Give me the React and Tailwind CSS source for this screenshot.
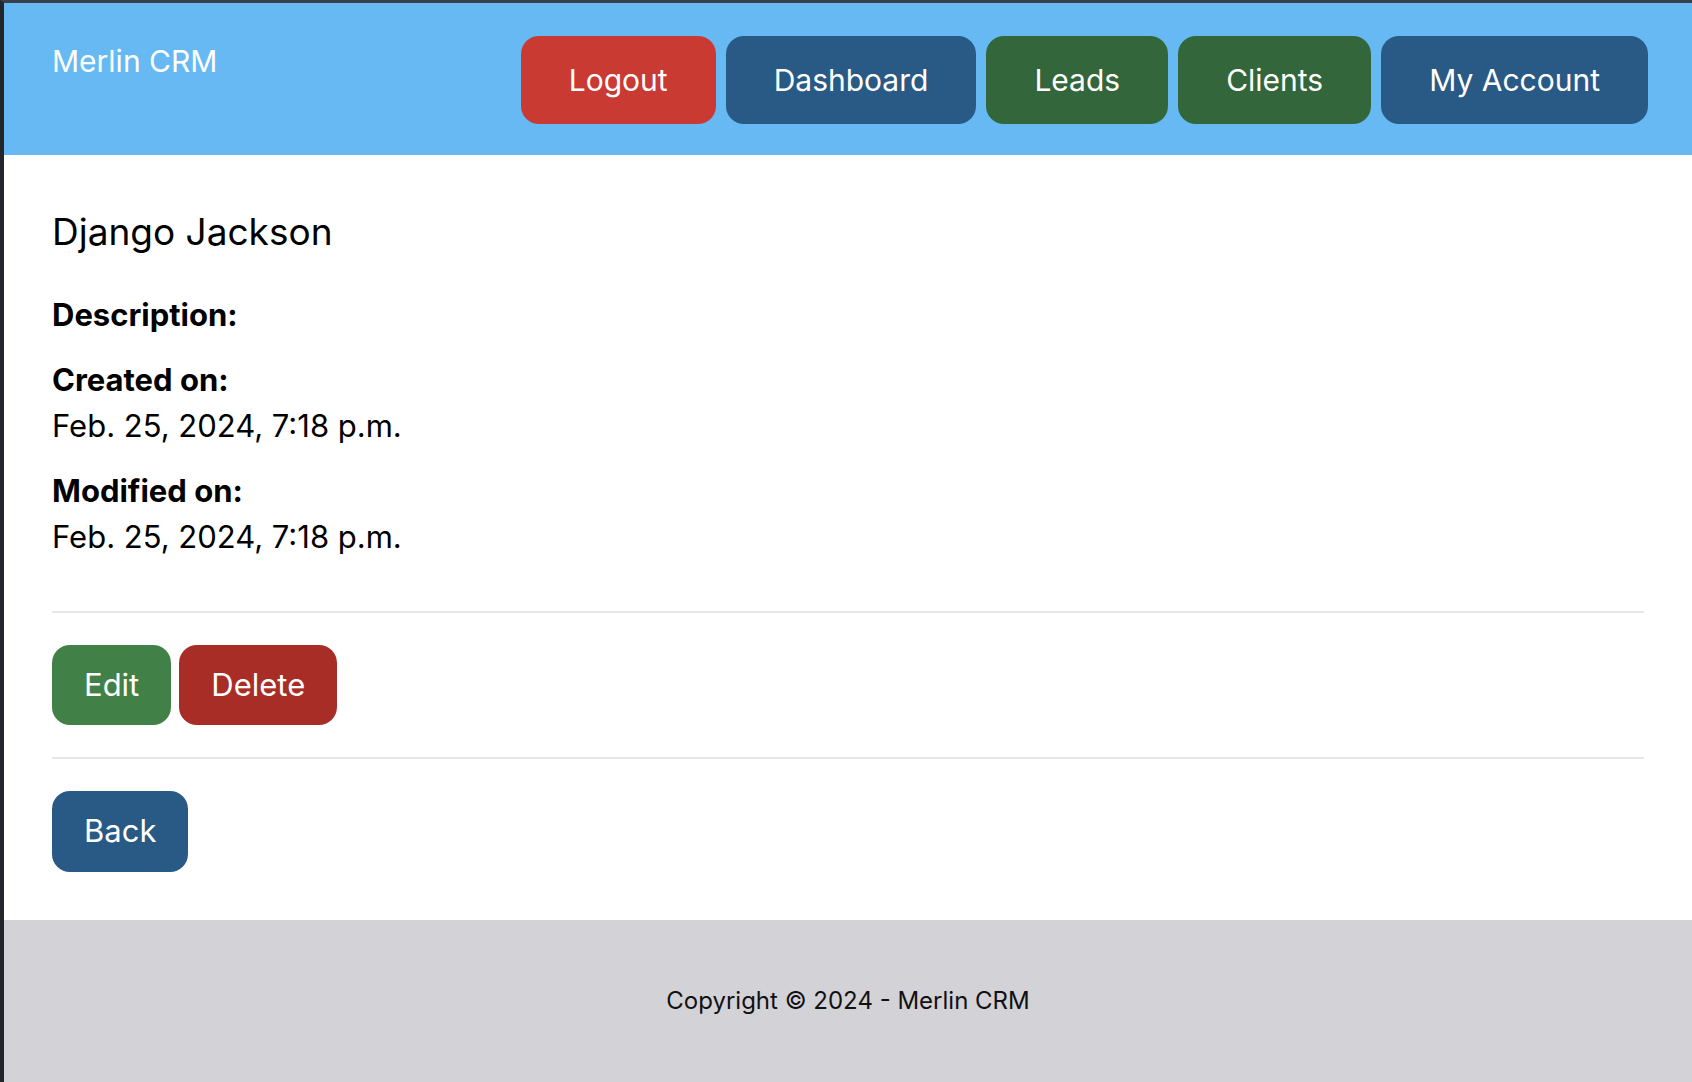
import React from 'react'

const navItems = [
  { label: 'Logout', cls: 'bg-[#c93a33]' },
  { label: 'Dashboard', cls: 'bg-[#295985]' },
  { label: 'Leads', cls: 'bg-[#33663a]' },
  { label: 'Clients', cls: 'bg-[#33663a]' },
  { label: 'My Account', cls: 'bg-[#295985]' },
]

function Field({ label, value }) {
  return (
    <div className="pb-[18px]">
      <p className="font-bold">{label}</p>
      {value && <p>{value}</p>}
    </div>
  )
}

export default function App() {
  return (
    <div
      className="min-h-screen flex flex-col bg-white text-black border-t-[3px] border-t-[#3b3e4b] border-l-4 border-l-[#23252d] text-[31px] leading-[1.5]"
      style={{ fontFamily: 'Inter, "Noto Sans", sans-serif' }}
    >
      {/* Header */}
      <header className="bg-[#66b9f2] pl-12 pr-[44px] pt-[33px] pb-[31px] flex items-start justify-between text-[30px] leading-[47px]">
        <a className="text-white mt-[2px]">Merlin CRM</a>
        <nav className="flex gap-[10px]">
          {navItems.map(item => (
            <a key={item.label} className={`${item.cls} text-white px-12 pt-[21px] pb-5 rounded-[18px]`}>
              {item.label}
            </a>
          ))}
        </nav>
      </header>

      {/* Lead detail */}
      <main className="flex-1 px-12 pt-12 pb-12">
        <h1 className="text-[37px] leading-[57px] mb-8">Django Jackson</h1>

        <Field label="Description:" />
        <Field label="Created on:" value="Feb. 25, 2024, 7:18 p.m." />
        <Field label="Modified on:" value="Feb. 25, 2024, 7:18 p.m." />

        <hr className="border-0 h-[2px] bg-[#e5e5ea] mt-8 mb-8" />

        <div className="flex gap-2">
          <a className="bg-[#418147] text-white px-8 py-[17px] rounded-[18px]">Edit</a>
          <a className="bg-[#a82d27] text-white px-8 py-[17px] rounded-[18px]">Delete</a>
        </div>

        <hr className="border-0 h-[2px] bg-[#e5e5ea] mt-8 mb-8" />

        <div className="flex">
          <a className="bg-[#295985] text-white px-8 py-[17px] rounded-[18px]">Back</a>
        </div>
      </main>

      {/* Footer */}
      <footer className="bg-[#d3d2d7] py-[63px] text-center text-[24px] leading-[1.5] text-[#111]">
        Copyright © 2024 - Merlin CRM
      </footer>
    </div>
  )
}
